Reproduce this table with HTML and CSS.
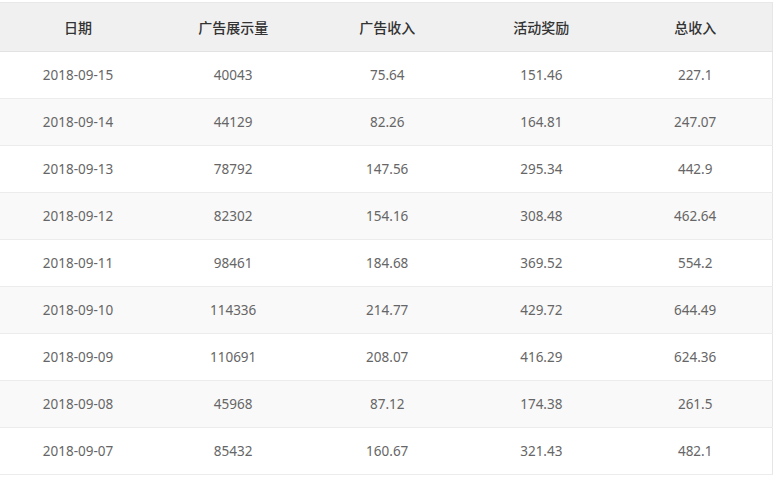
FILE: index.html
```html
<!DOCTYPE html>
<html lang="zh-CN">
<head>
<meta charset="utf-8">
<title>收入统计</title>
<link rel="stylesheet" href="styles.css">
</head>
<body>
<div class="wrap">
<table class="data">
  <colgroup>
    <col class="c-date"><col class="c-num"><col class="c-num"><col class="c-num"><col class="c-num">
  </colgroup>
  <thead>
    <tr><th>日期</th><th>广告展示量</th><th>广告收入</th><th>活动奖励</th><th>总收入</th></tr>
  </thead>
  <tbody>
    <tr><td>2018-09-15</td><td>40043</td><td>75.64</td><td>151.46</td><td>227.1</td></tr>
    <tr><td>2018-09-14</td><td>44129</td><td>82.26</td><td>164.81</td><td>247.07</td></tr>
    <tr><td>2018-09-13</td><td>78792</td><td>147.56</td><td>295.34</td><td>442.9</td></tr>
    <tr><td>2018-09-12</td><td>82302</td><td>154.16</td><td>308.48</td><td>462.64</td></tr>
    <tr><td>2018-09-11</td><td>98461</td><td>184.68</td><td>369.52</td><td>554.2</td></tr>
    <tr><td>2018-09-10</td><td>114336</td><td>214.77</td><td>429.72</td><td>644.49</td></tr>
    <tr><td>2018-09-09</td><td>110691</td><td>208.07</td><td>416.29</td><td>624.36</td></tr>
    <tr><td>2018-09-08</td><td>45968</td><td>87.12</td><td>174.38</td><td>261.5</td></tr>
    <tr><td>2018-09-07</td><td>85432</td><td>160.67</td><td>321.43</td><td>482.1</td></tr>
  </tbody>
</table>
</div>
</body>
</html>
```
FILE: styles.css
```css
html, body {
  margin: 0;
  padding: 0;
  background: #fff;
}
.wrap {
  padding-top: 2px;
  width: 775px;
}
.data {
  width: 773px;
  border-collapse: collapse;
  table-layout: fixed;
  border-top: 1px solid #e8e8e8;
  border-right: 1px solid #e6e6e6;
  font-family: "Noto Sans", "Noto Sans CJK SC", sans-serif;
}
.c-date { width: 156px; }
.c-num { width: 154px; }
.data th {
  height: 48px;
  padding: 0;
  background: #f0f0f0;
  color: #333;
  font-family: "Noto Sans CJK SC", sans-serif;
  font-size: 14px;
  font-weight: 500;
  text-align: center;
  border-bottom: 1px solid #e2e2e2;
}
.data td {
  height: 46px;
  padding: 0;
  text-align: center;
  color: #666;
  font-size: 13.5px;
  border-bottom: 1px solid #ececec;
}
.data tbody tr:nth-child(even) td {
  background: #f9f9f9;
}
```
